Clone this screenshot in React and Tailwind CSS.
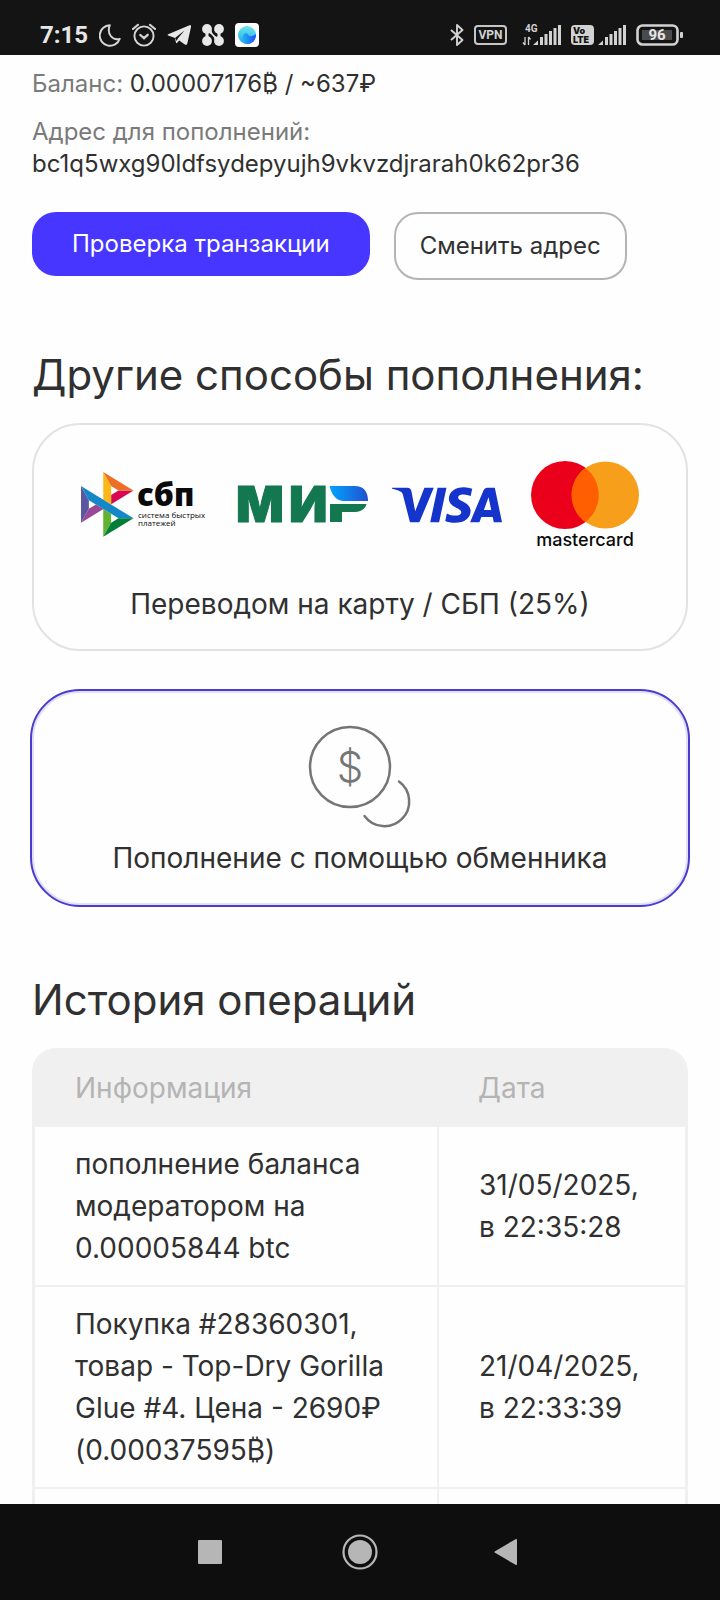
import { SiVisa } from 'react-icons/si';

const operations = [
  {
    id: 1,
    info: 'пополнение баланса модератором на 0.00005844 btc',
    date: '31/05/2025, в 22:35:28',
  },
  {
    id: 2,
    info: 'Покупка #28360301, товар - Top-Dry Gorilla Glue #4. Цена - 2690₽ (0.00037595₿)',
    date: '21/04/2025, в 22:33:39',
  },
  { id: 3, info: '', date: '' },
];

function Signal() {
  return (
    <svg width="28" height="20" viewBox="0 0 28 20" fill="#d2d2d2" aria-hidden="true">
      <path d="M0 20 L5 15.5 V20 Z" />
      <rect x="7" y="12" width="3" height="8" />
      <rect x="11.5" y="9" width="3" height="11" />
      <rect x="16" y="6" width="3" height="14" />
      <rect x="20.5" y="3" width="3" height="17" />
      <rect x="25" y="0" width="3" height="20" />
    </svg>
  );
}

function StatusBar() {
  return (
    <header className="flex h-[55px] shrink-0 items-end justify-between bg-[#141414] pr-9 pb-2 pl-10 font-['Roboto',sans-serif] text-[#e6e6e6]">
      <div className="flex items-center gap-[11px]">
        <span className="text-2xl leading-6 font-bold">7:15</span>
        {/* Do not disturb */}
        <svg width="22" height="24" viewBox="0 0 22 24" fill="none" stroke="#d6d6d6" strokeWidth="1.9" strokeLinejoin="round" aria-hidden="true">
          <path d="M10.8 2.2 A10.3 10.3 0 1 0 20.8 15.8 C14 17.8 7.3 11.5 10.8 2.2 Z" />
        </svg>
        {/* Alarm */}
        <svg width="24" height="24" viewBox="0 0 24 24" fill="none" stroke="#d6d6d6" strokeWidth="1.9" strokeLinecap="round" aria-hidden="true">
          <circle cx="12" cy="13" r="9.6" />
          <path d="M1 6 L6 1.8 M23 6 L18 1.8" strokeWidth="2.1" />
          <path d="M8.3 12 L12 15.2 L15.7 11.8" strokeWidth="2.3" />
        </svg>
        {/* Telegram */}
        <svg width="24" height="24" viewBox="0 0 24 24" fill="#e8e8e8" aria-hidden="true">
          <path d="M1.2 11.2 L22.5 2.3 Q24.5 1.7 24 4 L20.3 20.5 Q19.8 22.7 17.8 21.5 L12.3 17.5 L10 20 Q9 20.6 8.8 19 L8 15 L1.2 12.6 Q0 11.9 1.2 11.2 Z" />
          <path d="M8 15 L17.5 7.5 L10.6 15.8 L9.8 18 Z" fill="#141414" />
        </svg>
        {/* Four petals */}
        <svg width="22" height="24" viewBox="0 0 22 24" fill="#e8e8e8" aria-hidden="true">
          <circle cx="5" cy="6" r="4.9" />
          <circle cx="17" cy="6" r="4.9" />
          <circle cx="5" cy="18" r="4.9" />
          <circle cx="17" cy="18" r="4.9" />
          <path d="M3.5 10 H6.5 V14 H3.5 Z M15.5 10 H18.5 V14 H15.5 Z M7.5 8 L9.5 7.5 C10 10.5 12 12 14.5 14 L12.5 16.5 C12 13.5 10 12 7.5 10 Z" />
        </svg>
        {/* Browser */}
        <svg width="24" height="24" viewBox="0 0 24 24" aria-hidden="true">
          <defs>
            <linearGradient id="wave" x1="0" y1="0" x2="1" y2="0">
              <stop offset="0" stopColor="#22b8f0" />
              <stop offset="1" stopColor="#1f4dff" />
            </linearGradient>
            <linearGradient id="sky" x1="0" y1="0" x2="0" y2="1">
              <stop offset="0" stopColor="#6fe6ea" />
              <stop offset="1" stopColor="#1aa7f2" />
            </linearGradient>
          </defs>
          <rect width="24" height="24" rx="4" fill="#fff" />
          <circle cx="12" cy="12" r="9" fill="url(#sky)" />
          <path d="M8 13 C9 9 13 10 13.5 12.5 C15 14 19 13 21 11 C21.3 17 17 21 12 21 C7 21 6 16 8 13 Z" fill="url(#wave)" />
        </svg>
      </div>

      <div className="flex items-center gap-2.5">
        {/* Bluetooth */}
        <svg width="14" height="24" viewBox="0 0 14 24" fill="none" stroke="#d2d2d2" strokeWidth="1.9" strokeLinejoin="round" aria-hidden="true">
          <path d="M1 7 L12.5 17 L7 22 V2 L12.5 7 L1 17" />
        </svg>
        <span className="flex h-5 w-[33px] items-center justify-center rounded-sm border-2 border-[#c6c6c6] text-[12px] leading-3 font-bold text-[#d2d2d2]">
          VPN
        </span>
        <div className="flex items-center pl-1.5">
          <svg width="10" height="24" viewBox="0 0 10 24" className="overflow-visible" aria-hidden="true">
            <text x="2" y="9" fontSize="10" fontWeight="700" fill="#d2d2d2">4G</text>
            <path d="M2 14 V22 M2 22 L0 19.5 M5.5 14 V22 M5.5 14 L7.5 16.5" stroke="#d2d2d2" strokeWidth="1.3" fill="none" />
          </svg>
          <Signal />
        </div>
        <span className="flex h-5 w-[23px] flex-col justify-center rounded-sm bg-[#d2d2d2] pl-0.5 font-['Inter',sans-serif] text-[9px] leading-[9px] font-black text-[#141414]">
          <span>Vo</span>
          <span>LTE</span>
        </span>
        <div className="-ml-1.5">
          <Signal />
        </div>
        <svg width="48" height="22" viewBox="0 0 48 22" aria-hidden="true">
          <rect x="1.5" y="1.5" width="40" height="19" rx="5" fill="none" stroke="#d2d2d2" strokeWidth="2.6" />
          <rect x="6" y="6" width="30" height="10" fill="#4b4b4b" />
          <rect x="44" y="8" width="3" height="6" rx="1" fill="#d2d2d2" />
          <text x="21" y="16" textAnchor="middle" fontSize="15" fontWeight="700" fill="#e6e6e6">96</text>
        </svg>
      </div>
    </header>
  );
}

function SbpLogo() {
  return (
    <svg width="132" height="66" viewBox="0 0 132 66" role="img" aria-label="СБП">
      <g transform="scale(0.54)">
        <polygon fill="#5b57a2" points="0,26.12 14.532,52.097 14.532,67.941 0.017,93.863" />
        <polygon fill="#d90751" points="55.797,42.643 69.415,34.297 97.283,34.271 55.797,59.686" />
        <polygon fill="#fab718" points="55.72,25.967 55.797,60.391 41.227,51.456 41.227,0" />
        <polygon fill="#ed6f26" points="97.283,34.271 69.414,34.297 55.72,25.967 41.227,0" />
        <polygon fill="#63b22f" points="55.797,94.007 55.797,77.322 41.227,68.559 41.256,120.039" />
        <polygon fill="#1487c9" points="69.385,85.737 14.532,52.097 0,26.12 97.226,85.686" />
        <polygon fill="#017f36" points="41.256,120.039 55.796,94.007 69.385,85.737 97.226,85.686" />
        <polygon fill="#984995" points="0.017,93.863 41.648,68.559 27.652,59.971 14.532,67.941" />
      </g>
      <g className="font-['Open_Sans',sans-serif]" fill="#0a0a0a">
        <text x="56" y="34" fontSize="31" fontWeight="800">сбп</text>
        <text x="57" y="46" fontSize="8">система быстрых</text>
        <text x="57" y="54" fontSize="8">платежей</text>
      </g>
    </svg>
  );
}

function MirLogo() {
  return (
    <svg width="131" height="36" viewBox="0 0 131 36" className="overflow-visible" role="img" aria-label="МИР">
      <defs>
        <linearGradient id="mir" x1="0" x2="1" y1="0" y2="0">
          <stop offset="0" stopColor="#00a5ff" />
          <stop offset="1" stopColor="#2350d0" />
        </linearGradient>
      </defs>
      <g className="font-['Inter',sans-serif]" fill="#13774f" stroke="#13774f" fontSize="50" fontWeight="900">
        <text x="-1" y="35">М</text>
        <text x="52" y="35">И</text>
      </g>
      <path d="M93 17 H129.5 C128 22.5 123 25 118 25 H105 V35 H93 Z" fill="#13774f" />
      <path d="M92.5 -1 H118 C126 -1 131 4 131 14 H107 C100 14 95 9 92.5 -1 Z" fill="url(#mir)" />
    </svg>
  );
}

function MastercardLogo() {
  return (
    <svg width="108" height="88" viewBox="0 0 108 88" role="img" aria-label="mastercard">
      <circle cx="34" cy="34" r="34" fill="#eb001b" />
      <circle cx="74.5" cy="34" r="33.5" fill="#f79f1b" />
      <path d="M54.25 6.9 A34 34 0 0 1 54.25 61.1 A33.5 33.5 0 0 1 54.25 6.9 Z" fill="#ff5f00" />
      <text x="54" y="85" textAnchor="middle" fontSize="18" fontWeight="500" fill="#0a0a0a" className="font-['Inter',sans-serif]">
        mastercard
      </text>
    </svg>
  );
}

function CoinsIcon() {
  return (
    <svg width="104" height="104" viewBox="0 0 104 104" fill="none" stroke="#757575" strokeWidth="2.5" strokeLinecap="round" aria-hidden="true">
      <circle cx="42" cy="42" r="40" />
      <path d="M91 56.5 A24.7 24.7 0 1 1 56.5 91" />
      <text x="42" y="57" textAnchor="middle" fontSize="42" fontWeight="300" fill="#757575" stroke="none">$</text>
    </svg>
  );
}

export default function App() {
  return (
    <div className="flex h-screen flex-col bg-[#fefefe] font-['Inter',sans-serif] text-[#303030]">
      <StatusBar />

      <main className="min-h-0 flex-1 overflow-hidden px-8 pt-[13px]">
        {/* Balance and deposit address */}
        <section className="text-2xl leading-8">
          <p>
            <span className="text-[#7a7a7a]">Баланс:</span> 0.00007176₿ / ~637₽
          </p>
          <p className="mt-4 text-[#7a7a7a]">Адрес для пополнений:</p>
          <p className="break-all">bc1q5wxg90ldfsydepyujh9vkvzdjrarah0k62pr36</p>
          <div className="mt-8 flex items-start gap-6">
            <button type="button" className="h-16 rounded-3xl bg-[#4636ff] px-10 text-white">
              Проверка транзакции
            </button>
            <button type="button" className="h-[68px] rounded-3xl border-2 border-[#b4b4b4] px-6">
              Сменить адрес
            </button>
          </div>
        </section>

        <section className="mt-[71px]">
          <h2 className="text-[42px] leading-[48px]">Другие способы пополнения:</h2>
          <button type="button" className="mt-6 flex w-full flex-col items-center rounded-[48px] border-2 border-[#e2e2e2] pt-9 pb-6">
            <span className="flex items-center justify-center gap-6">
              <SbpLogo />
              <MirLogo />
              <span className="w-[115px]">
                <SiVisa size={110} color="#1434cb" title="VISA" className="-my-9" />
              </span>
              <MastercardLogo />
            </span>
            <span className="mt-[34px] text-[28px] leading-[42px]">Переводом на карту / СБП (25%)</span>
          </button>
          <button type="button" className="mt-10 flex w-full flex-col items-center rounded-[48px] border-2 border-[#e0dffc] pt-8 pb-6 outline-2 outline-[#483bcd]">
            <CoinsIcon />
            <span className="mt-2 text-[28px] leading-[42px]">Пополнение с помощью обменника</span>
          </button>
        </section>

        <section className="mt-[71px]">
          <h2 className="text-[42px] leading-[48px]">История операций</h2>
          <div className="mt-6 overflow-hidden rounded-t-3xl border-x-3 border-[#f0f0f0]">
            <table className="w-full table-fixed text-left text-[28px] leading-[42px]">
              <thead>
                <tr className="h-[79px] bg-[#f0f0f0] text-[#b4b4b4]">
                  <th className="w-[62%] px-10 font-normal">Информация</th>
                  <th className="px-10 font-normal">Дата</th>
                </tr>
              </thead>
              <tbody>
                {operations.map((item) => (
                  <tr key={item.id} className="h-[158px] border-b-2 border-[#f0f0f0]">
                    <td className="border-r-2 border-[#f0f0f0] px-10 py-4">{item.info}</td>
                    <td className="px-10 py-4">{item.date}</td>
                  </tr>
                ))}
              </tbody>
            </table>
          </div>
        </section>
      </main>

      {/* System navigation */}
      <nav className="flex h-24 shrink-0 items-center justify-center gap-[114px] bg-[#0e0e0e]">
        <button type="button" aria-label="Недавние">
          <svg width="36" height="36" viewBox="0 0 36 36" fill="#b6b6b6">
            <rect x="6" y="6" width="24" height="24" rx="1" />
          </svg>
        </button>
        <button type="button" aria-label="Домой">
          <svg width="36" height="36" viewBox="0 0 36 36" fill="#b6b6b6">
            <circle cx="18" cy="18" r="16.5" fill="none" stroke="#b6b6b6" strokeWidth="2.2" />
            <circle cx="18" cy="18" r="12" />
          </svg>
        </button>
        <button type="button" aria-label="Назад">
          <svg width="36" height="36" viewBox="0 0 36 36" fill="#b6b6b6">
            <path d="M3 17.2 L23.5 5.2 Q25 4.5 25 6.2 V30 Q25 31.5 23.5 30.8 L3 18.8 Q1.8 18 3 17.2 Z" />
          </svg>
        </button>
      </nav>
    </div>
  );
}
